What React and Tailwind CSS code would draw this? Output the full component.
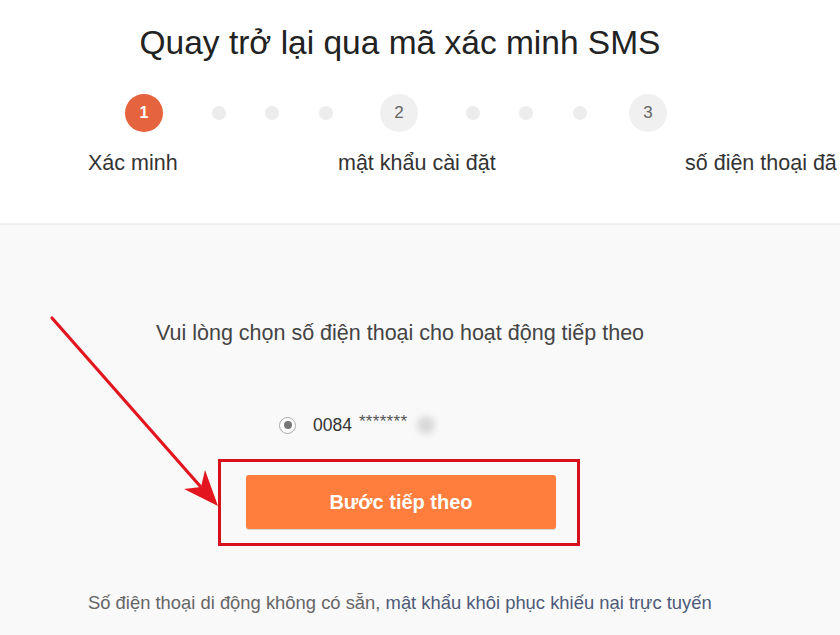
import React from "react";

function Dot({ ml }) {
  return <div className={`h-[14px] w-[14px] shrink-0 rounded-full bg-[#ececec] ${ml}`} />;
}

export default function App() {
  return (
    <div className="relative h-[635px] w-[840px] overflow-hidden bg-[#f9f9f9] font-['Liberation_Sans',Arial,sans-serif]">
      {/* top section */}
      <div className="h-[225px] border-b-2 border-[#efefef] bg-white">
        <div className="pr-[40px] pt-[23px] text-center text-[33.5px] leading-[40px] text-[#222]">
          Quay trở lại qua mã xác minh SMS
        </div>
        <div className="mt-[31px] flex items-center pl-[125px]">
          <div className="flex h-[38px] w-[38px] shrink-0 items-center justify-center rounded-full bg-[#e5633d] text-[16px] font-bold text-white">
            1
          </div>
          <Dot ml="ml-[49px]" />
          <Dot ml="ml-[39px]" />
          <Dot ml="ml-[40px]" />
          <div className="ml-[47px] flex h-[38px] w-[38px] shrink-0 items-center justify-center rounded-full bg-[#f0f0f0] text-[17px] text-[#666]">
            2
          </div>
          <Dot ml="ml-[48px]" />
          <Dot ml="ml-[39px]" />
          <Dot ml="ml-[40px]" />
          <div className="ml-[42px] flex h-[38px] w-[38px] shrink-0 items-center justify-center rounded-full bg-[#f0f0f0] text-[17px] text-[#666]">
            3
          </div>
        </div>
        <div className="mt-[18px] flex whitespace-nowrap pl-[88px] text-[21.5px] leading-[26px] text-[#333]">
          <span className="w-[250px] shrink-0">Xác minh</span>
          <span className="w-[347px] shrink-0">mật khẩu cài đặt</span>
          <span className="shrink-0">số điện thoại đã</span>
        </div>
      </div>

      {/* bottom section */}
      <div className="flex flex-col items-center pr-[40px]">
        <div className="mt-[96px] text-[21.5px] leading-[24px] text-[#444]">
          Vui lòng chọn số điện thoại cho hoạt động tiếp theo
        </div>
        <div className="mt-[70px] flex items-center self-start pl-[279px]">
          <div className="flex h-[17px] w-[17px] items-center justify-center rounded-full border border-[#aaa] bg-white">
            <div className="h-[8px] w-[8px] rounded-full bg-[#777]" />
          </div>
          <span className="ml-[17px] text-[17.5px] leading-[20px] text-[#333]">0084</span>
          <span className="ml-[7px] -translate-y-[3px] text-[17px] leading-[20px] tracking-[0.3px] text-[#555]">*******</span>
          <span className="ml-[10px] h-[18px] w-[18px] rounded-full bg-[#d8d8d8] blur-[3px]" />
        </div>
        <div className="mr-[2px] mt-[24px] flex h-[87px] w-[362px] items-start border-[3px] border-[#d5111d] pl-[25px] pt-[13px]">
          <div className="flex h-[54px] w-[310px] items-center justify-center rounded-[3px] bg-[#ff7e3d] text-[20px] font-bold text-white shadow-[0_1px_1px_rgba(0,0,0,0.15)]">
            Bước tiếp theo
          </div>
        </div>
        <div className="mt-[47px] self-start pl-[88px] text-[18.4px] leading-[20px] text-[#666]">
          Số điện thoại di động không có sẵn,{" "}
          <span className="text-[#4d5a78]">mật khẩu khôi phục khiếu nại trực tuyến</span>
        </div>
      </div>

      {/* annotation arrow */}
      <svg className="pointer-events-none absolute left-0 top-0" width="840" height="635">
        <line x1="52" y1="318" x2="200" y2="486" stroke="#e3151e" strokeWidth="3.2" strokeLinecap="round" />
        <polygon points="218,506 184,489 201,487 205,470" fill="#e3151e" />
      </svg>
    </div>
  );
}
